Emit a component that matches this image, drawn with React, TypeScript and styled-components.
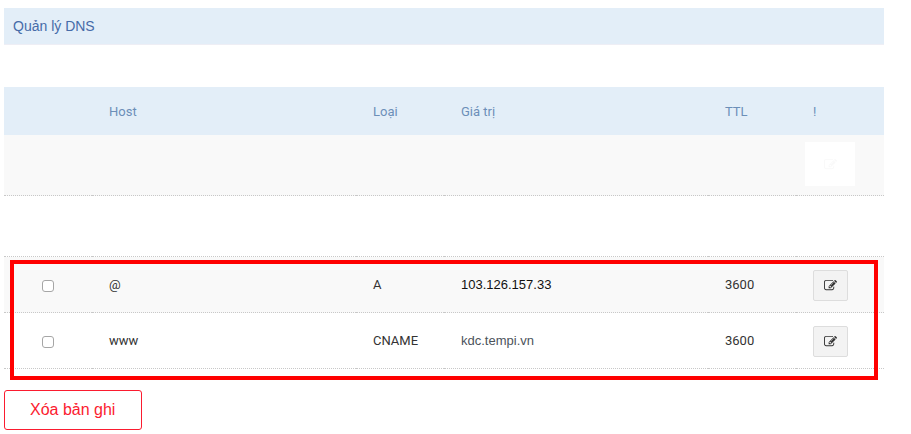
import React from "react";
import styled, { createGlobalStyle } from "styled-components";

const GlobalStyle = createGlobalStyle`
  *, *::before, *::after { box-sizing: border-box; }
  body {
    margin: 0;
    background: #fff;
    color: #333;
    font-family: Roboto, "Liberation Sans", sans-serif;
    font-size: 13px;
    line-height: 20px;
  }
`;

const Page = styled.main`
  padding: 8px 27px 4px 4px;
`;

const Title = styled.h1`
  margin: 0 0 42px;
  padding: 8px 9px;
  border-bottom: 1px solid #eeeef5;
  background: #e3eef8;
  color: #466ba8;
  font: 400 14px/20px "Liberation Sans", Arial, sans-serif;
`;

const Records = styled.div`
  position: relative;
  margin-bottom: 21px;
`;

const Highlight = styled.div`
  position: absolute;
  inset: 173px 6px -11px;
  border: 4px solid #f00;
  pointer-events: none;
`;

const Table = styled.table`
  width: 100%;
  table-layout: fixed;
  border-collapse: separate;
  border-spacing: 0;
`;

const Column = styled.col<{ $share: number }>`
  width: ${({ $share }) => $share}%;
`;

const HeadCell = styled.th`
  height: 48px;
  padding: 2px 16px 0 17px;
  background: #e3eef8;
  color: #6c8fb8;
  font-weight: 400;
  text-align: left;
`;

const Row = styled.tr<{ $shaded?: boolean; $tall?: boolean }>`
  height: ${({ $tall }) => ($tall ? 61 : 56)}px;
  background: ${({ $shaded }) => ($shaded ? "#f9f9f9" : "#fff")};
`;

const Cell = styled.td`
  padding: 0 16px 0 17px;
  border-bottom: 1px dotted #c8c8c8;
  vertical-align: middle;
`;

const CheckCell = styled(Cell)`
  padding: 3px 0 0;
`;

const ActionCell = styled(Cell)<{ $wide?: boolean }>`
  padding: ${({ $wide }) => ($wide ? "0 0 2px 9px" : "2px 0 0 17px")};
`;

const Value = styled.span<{ $muted?: boolean }>`
  color: ${({ $muted }) => ($muted ? "#4c535b" : "#111")};
  font-family: "Liberation Sans", Arial, sans-serif;
`;

const Check = styled.input`
  display: block;
  appearance: none;
  width: 12px;
  height: 12px;
  margin: 0 auto;
  border: 1px solid #a6a6a6;
  border-radius: 3px;
  background: #fff;
  &:checked { background: #466ba8; }
`;

const EditButton = styled.button<{ $ghost?: boolean }>`
  display: flex;
  align-items: center;
  justify-content: center;
  width: ${({ $ghost }) => ($ghost ? 50 : 35)}px;
  height: ${({ $ghost }) => ($ghost ? 44 : 31)}px;
  margin: 0;
  padding: 0;
  border: ${({ $ghost }) => ($ghost ? "0" : "1px solid #ddd")};
  border-radius: ${({ $ghost }) => ($ghost ? 0 : 2)}px;
  background: ${({ $ghost }) => ($ghost ? "#fff" : "#f3f3f3")};
  color: ${({ $ghost }) => ($ghost ? "#f9f9f9" : "#333")};
`;

const DeleteButton = styled.button`
  display: block;
  height: 40px;
  padding: 0 26px 0 25px;
  border: 1px solid #fb1b2f;
  border-radius: 3px;
  background: #fff;
  color: #fb1b2f;
  font: 400 16px/20px "Liberation Sans", Arial, sans-serif;
`;

const EditIcon = () => (
  <svg width="13" height="13" viewBox="0 0 1792 1792" fill="currentColor" aria-hidden="true">
    <path d="M888 1184l116-116-152-152-116 116v56h96v96h56zm440-720q-16-16-33 1l-350 350q-17 17-1 33t33-1l350-350q17-17 1-33zm80 594v190q0 119-84.5 203.5t-203.5 84.5h-832q-119 0-203.5-84.5t-84.5-203.5v-832q0-119 84.5-203.5t203.5-84.5h832q63 0 117 25 15 7 18 23 3 17-9 29l-49 49q-14 14-32 8-23-6-45-6h-832q-66 0-113 47t-47 113v832q0 66 47 113t113 47h832q66 0 113-47t47-113v-126q0-13 9-22l64-64q15-15 35-7t20 29zm-96-738l288 288-672 672h-288v-288zm444 132l-92 92-288-288 92-92q28-28 68-28t68 28l152 152q28 28 28 68t-28 68z" />
  </svg>
);

const records = [
  { host: "@", type: "A", value: "103.126.157.33", ttl: 3600, shaded: true, muted: false },
  { host: "www", type: "CNAME", value: "kdc.tempi.vn", ttl: 3600, shaded: false, muted: true },
];

const shares = [10, 30, 10, 30, 10, 10];

export default function App() {
  return (
    <>
      <GlobalStyle />
      <Page>
        <Title>Quản lý DNS</Title>
        <Records>
          <Table>
            <colgroup>
              {shares.map((share, i) => (
                <Column key={i} $share={share} />
              ))}
            </colgroup>
            <thead>
              <tr>
                {["", "Host", "Loại", "Giá trị", "TTL", "!"].map((label, i) => (
                  <HeadCell key={i} scope="col">{label}</HeadCell>
                ))}
              </tr>
            </thead>
            <tbody>
              <Row $shaded $tall>
                {shares.slice(1).map((_, i) => (
                  <Cell key={i} />
                ))}
                <ActionCell $wide>
                  <EditButton type="button" $ghost aria-label="Sửa">
                    <EditIcon />
                  </EditButton>
                </ActionCell>
              </Row>
              <Row $tall>
                {shares.map((_, i) => (
                  <Cell key={i} />
                ))}
              </Row>
              {records.map((r) => (
                <Row key={r.host} $shaded={r.shaded}>
                  <CheckCell>
                    <Check type="checkbox" aria-label={r.host} />
                  </CheckCell>
                  <Cell>{r.host}</Cell>
                  <Cell>{r.type}</Cell>
                  <Cell>
                    <Value $muted={r.muted}>{r.value}</Value>
                  </Cell>
                  <Cell>{r.ttl}</Cell>
                  <ActionCell>
                    <EditButton type="button" aria-label={`Sửa ${r.host}`}>
                      <EditIcon />
                    </EditButton>
                  </ActionCell>
                </Row>
              ))}
            </tbody>
          </Table>
          <Highlight />
        </Records>
        <DeleteButton type="button">Xóa bản ghi</DeleteButton>
      </Page>
    </>
  );
}
